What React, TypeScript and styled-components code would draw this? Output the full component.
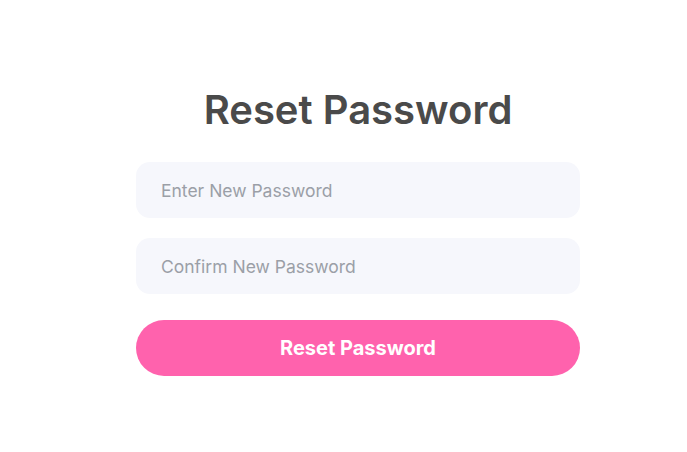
import styled, { createGlobalStyle } from 'styled-components';

const GlobalStyle = createGlobalStyle`
  html, body {
    margin: 0;
    padding: 0;
    background: #ffffff;
    font-family: Inter, 'Noto Sans', sans-serif;
  }
`;

const Page = styled.main`
  min-height: 452px;
  padding-left: 29px;
  display: flex;
  justify-content: center;
`;

const Form = styled.form`
  width: 444px;
  padding-top: 86px;
  display: flex;
  flex-direction: column;
`;

const Title = styled.h1`
  margin: 0 0 28px;
  text-align: center;
  font-size: 40px;
  line-height: 48px;
  font-weight: 600;
  color: #4a4a4a;
`;

const Field = styled.input`
  box-sizing: border-box;
  height: 56px;
  width: 100%;
  margin-bottom: 20px;
  padding: 0 25px;
  border: none;
  border-radius: 14px;
  background: #f6f7fc;
  font-family: inherit;
  font-size: 17.5px;
  color: #4a4a4a;
  outline: none;

  &::placeholder {
    color: #9b9fa7;
  }
`;

const SubmitButton = styled.button`
  height: 56px;
  margin-top: 6px;
  border: none;
  border-radius: 28px;
  background: #ff62ad;
  color: #ffffff;
  font-family: inherit;
  font-size: 20px;
  font-weight: 700;
  cursor: pointer;
`;

export default function App() {
  return (
    <>
      <GlobalStyle />
      <Page>
        <Form onSubmit={(e) => e.preventDefault()}>
          <Title>Reset Password</Title>
          <Field type="password" placeholder="Enter New Password" />
          <Field type="password" placeholder="Confirm New Password" />
          <SubmitButton type="submit">Reset Password</SubmitButton>
        </Form>
      </Page>
    </>
  );
}
